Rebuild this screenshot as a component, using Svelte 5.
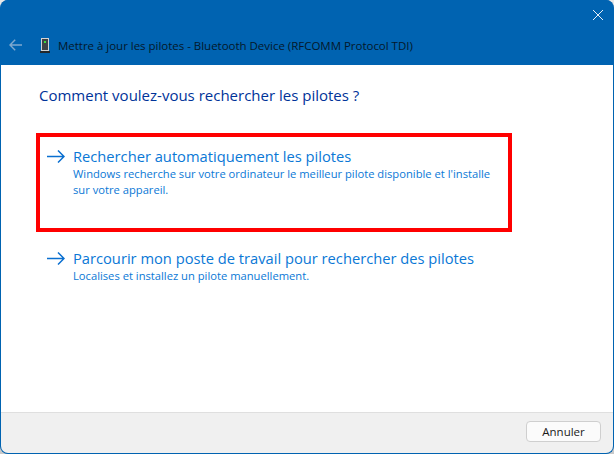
<script lang="ts">
  const options = [
    {
      title: 'Rechercher automatiquement les pilotes',
      lines: ["Windows recherche sur votre ordinateur le meilleur pilote disponible et l'installe", 'sur votre appareil.'],
      marked: true
    },
    {
      title: 'Parcourir mon poste de travail pour rechercher des pilotes',
      lines: ['Localises et installez un pilote manuellement.'],
      marked: false
    }
  ];
</script>

<div class="window">
  <header class="head">
    <div class="close-row">
      <svg class="close" width="10" height="10" viewBox="0 0 10 10" fill="none" stroke="#e6eff7" stroke-width="1">
        <path d="M0 0l10 10M10 0L0 10" />
      </svg>
    </div>
    <div class="title-row">
      <svg class="back" width="13" height="12" viewBox="0 0 13 12" fill="none" stroke="#7fa9cf" stroke-width="1.4">
        <path d="M13 6H1M6.200 .8L1 6l5.200 5.200" />
      </svg>
      <svg class="device" width="10" height="15" viewBox="0 0 10 15">
        <rect x="1" y="0" width="8" height="13" fill="#d4d4d4" />
        <rect x="2" y="1" width="6" height="11" fill="#3d4347" />
        <rect x="4" y="3" width="2" height="2" fill="#3ddc3d" />
        <rect x="0" y="13" width="10" height="2" fill="#23282c" />
      </svg>
      <span class="title">Mettre à jour les pilotes - Bluetooth Device (RFCOMM Protocol TDI)</span>
    </div>
  </header>

  <main class="body">
    <h1>Comment voulez-vous rechercher les pilotes ?</h1>
    {#each options as opt}
      <div class="option" class:marked={opt.marked}>
        <svg class="arrow" width="18" height="13" viewBox="0 0 18 13" fill="none" stroke="#0a6fd0" stroke-width="1.500">
          <path d="M0 6.500h17M11 .5l6 6-6 6" />
        </svg>
        <div class="text">
          <div class="opt-title">{opt.title}</div>
          {#each opt.lines as line}
            <div class="opt-line">{line}</div>
          {/each}
        </div>
      </div>
    {/each}
  </main>

  <footer class="foot">
    <button class="cancel">Annuler</button>
  </footer>
</div>

<style>
  :global(body) {
    background: linear-gradient(#e8e8e8, #c9c9c9);
    overflow: hidden;
  }

  .window {
    width: 614px;
    height: 454px;
    box-sizing: border-box;
    display: flex;
    flex-direction: column;
    background: #0063b1;
    border: solid #0063b1;
    border-width: 0 1px 1px;
    border-radius: 8px;
    overflow: hidden;
    font-family: 'Open Sans', 'Noto Sans', sans-serif;
  }

  .head {
    height: 65px;
    flex-shrink: 0;
    background: #0063b1;
  }

  .close-row {
    display: flex;
    justify-content: flex-end;
    padding: 10px 10px 0 0;
    height: 28px;
    box-sizing: border-box;
  }

  .title-row {
    display: flex;
    align-items: center;
    height: 34px;
    padding-left: 8px;
  }

  .back {
    margin-right: 18px;
  }

  .device {
    margin-right: 8px;
  }

  .title {
    font-size: 11.500px;
    letter-spacing: -0.02px;
    color: #04182b;
    white-space: nowrap;
  }

  .body {
    flex: 1;
    background: #fff;
    padding: 0 0 0 35px;
  }

  h1 {
    margin: 0;
    padding: 19px 0 0 3px;
    height: 68px;
    box-sizing: border-box;
    font-size: 15px;
    font-weight: 400;
    line-height: 22px;
    color: #003399;
    white-space: nowrap;
  }

  .option {
    display: flex;
    width: 476px;
    height: 99px;
    box-sizing: border-box;
    padding: 9px 0 0 7px;
    margin-bottom: 3px;
    border: 4px solid transparent;
  }

  .option.marked {
    border-color: #ff0000;
  }

  .arrow {
    margin: 4px 8px 0 0;
    flex-shrink: 0;
  }

  .opt-title {
    font-size: 14.700px;
    line-height: 20px;
    color: #0a78d6;
    white-space: nowrap;
  }

  .opt-line {
    font-size: 11.200px;
    line-height: 15.500px;
    color: #0a78d6;
    white-space: nowrap;
  }

  .foot {
    height: 41px;
    flex-shrink: 0;
    box-sizing: border-box;
    background: #f0f0f0;
    border-top: 1px solid #dfdfdf;
    display: flex;
    justify-content: flex-end;
    align-items: flex-start;
    padding: 8px 12px 0 0;
  }

  .cancel {
    width: 75px;
    height: 21px;
    padding: 0;
    background: #fbfbfb;
    border: 1px solid #cfcfcf;
    border-radius: 4px;
    font-family: inherit;
    font-size: 11.500px;
    color: #1a1a1a;
  }
</style>
